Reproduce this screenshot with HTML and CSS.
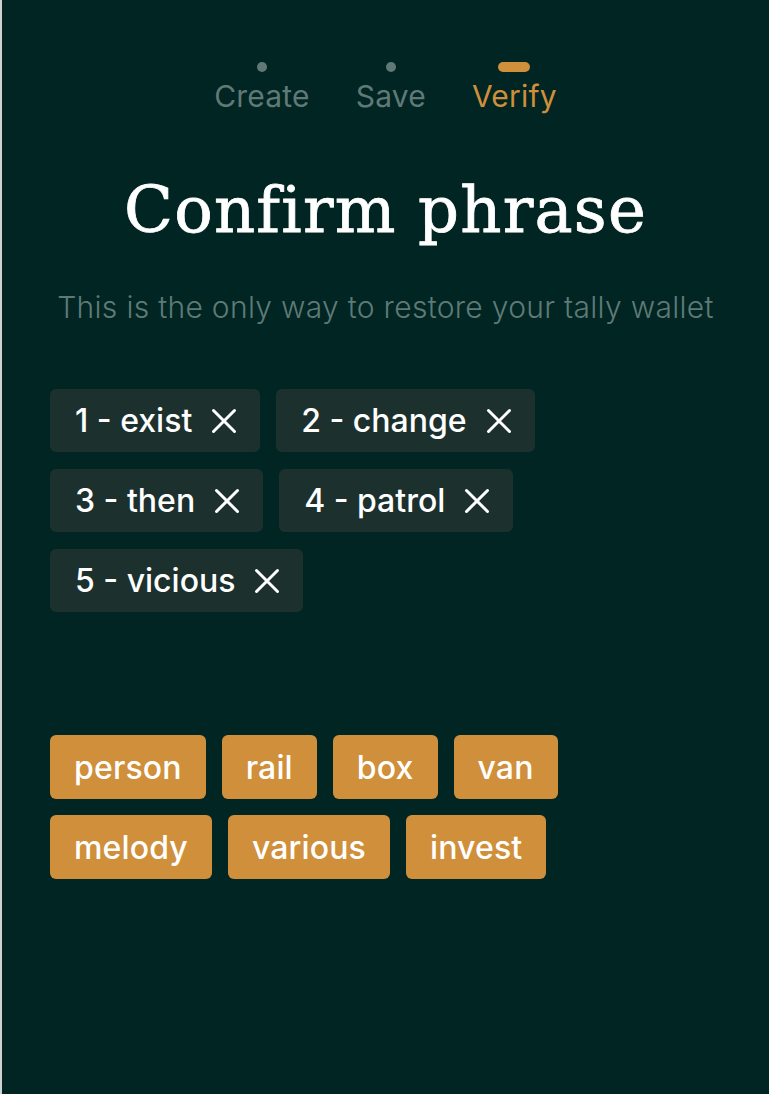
FILE: index.html
```html
<!DOCTYPE html>
<html lang="en">
<head>
  <meta charset="UTF-8">
  <title>Tally - Confirm phrase</title>
  <link rel="stylesheet" href="styles.css">
</head>
<body>

  <div class="halaman">

    <!-- langkah onboarding -->
    <div class="langkah">
      <div class="step">
        <span class="titik"></span>
        <span class="label">Create</span>
      </div>
      <div class="step">
        <span class="titik"></span>
        <span class="label">Save</span>
      </div>
      <div class="step aktif">
        <span class="titik"></span>
        <span class="label">Verify</span>
      </div>
    </div>

    <h1 class="judul">Confirm phrase</h1>
    <p class="sub">This is the only way to restore your tally wallet</p>

    <!-- kata yang sudah dipilih -->
    <div class="dipilih">
      <div class="chip">1 - exist <svg class="silang" viewBox="0 0 26 26"><path d="M2.5 2.5 L23.5 23.5 M23.5 2.5 L2.5 23.5"/></svg></div>
      <div class="chip">2 - change <svg class="silang" viewBox="0 0 26 26"><path d="M2.5 2.5 L23.5 23.5 M23.5 2.5 L2.5 23.5"/></svg></div>
      <div class="chip">3 - then <svg class="silang" viewBox="0 0 26 26"><path d="M2.5 2.5 L23.5 23.5 M23.5 2.5 L2.5 23.5"/></svg></div>
      <div class="chip">4 - patrol <svg class="silang" viewBox="0 0 26 26"><path d="M2.5 2.5 L23.5 23.5 M23.5 2.5 L2.5 23.5"/></svg></div>
      <div class="chip">5 - vicious <svg class="silang" viewBox="0 0 26 26"><path d="M2.5 2.5 L23.5 23.5 M23.5 2.5 L2.5 23.5"/></svg></div>
    </div>

    <!-- pilihan kata -->
    <div class="pilihan">
      <button class="kata">person</button>
      <button class="kata">rail</button>
      <button class="kata">box</button>
      <button class="kata">van</button>
      <button class="kata">melody</button>
      <button class="kata">various</button>
      <button class="kata">invest</button>
    </div>

  </div>

</body>
</html>
```

FILE: styles.css
```css
body {
  margin: 0;
  background: #002522;
  font-family: Inter, "Noto Sans", sans-serif;
}

.halaman {
  min-height: 1094px;
  box-sizing: border-box;
  border-left: 2px solid #cfd2d1;
  padding: 62px 48px 40px;
}

.langkah {
  display: flex;
  justify-content: center;
  gap: 46px;
}

.step {
  display: flex;
  flex-direction: column;
  align-items: center;
}

.titik {
  width: 10px;
  height: 10px;
  border-radius: 5px;
  background: #5f7a76;
}

.step .label {
  font-size: 30px;
  line-height: 34px;
  margin-top: 7px;
  letter-spacing: 0.2px;
  color: #5f7a76;
}

.step.aktif .titik {
  width: 32px;
  background: #d08f3a;
}

.step.aktif .label {
  color: #d08f3a;
}

.judul {
  margin: 59px 0 0;
  text-align: center;
  font-family: "DejaVu Serif", serif;
  font-weight: normal;
  font-size: 64px;
  line-height: 76px;
  letter-spacing: 1.2px;
  color: #fff;
  -webkit-text-stroke: 0.8px #fff;
}

.sub {
  margin: 41px 0 0;
  text-align: center;
  font-size: 30px;
  font-weight: 300;
  line-height: 36px;
  letter-spacing: 0.3px;
  color: #5f7a76;
}

.dipilih {
  display: flex;
  flex-wrap: wrap;
  gap: 17px 16px;
  margin-top: 64px;
}

.chip {
  display: flex;
  align-items: center;
  gap: 19px;
  height: 63px;
  padding: 0 23px 0 25px;
  border-radius: 6px;
  background: #1c312e;
  color: #fff;
  font-size: 32px;
  font-weight: 500;
}

.silang {
  width: 26px;
  height: 26px;
  stroke: #fff;
  stroke-width: 3;
  stroke-linecap: round;
  fill: none;
}

.pilihan {
  display: flex;
  flex-wrap: wrap;
  gap: 16px;
  margin-top: 123px;
}

.kata {
  height: 64px;
  padding: 0 24px;
  border: none;
  border-radius: 6px;
  background: #d08f3a;
  color: #fff;
  font-family: inherit;
  font-size: 32px;
  font-weight: 500;
  letter-spacing: 0.15px;
  cursor: pointer;
}
```
